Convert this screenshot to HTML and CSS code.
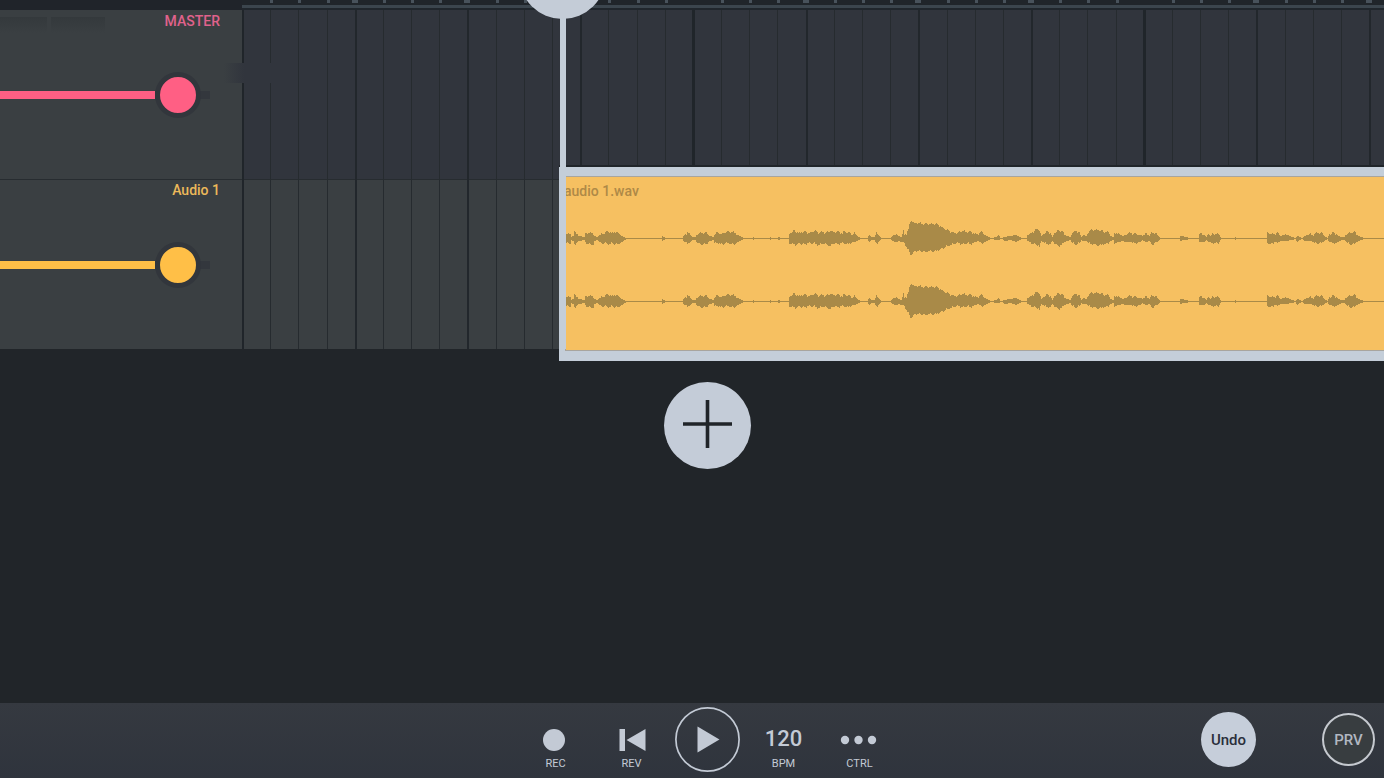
FILE: index.html
```html
<!DOCTYPE html>
<html lang="en">
<head>
<meta charset="utf-8">
<title>Audio Studio</title>
<meta name="viewport" content="width=device-width, initial-scale=1">
<link rel="stylesheet" href="styles.css">
</head>
<body>
<div class="app">
  <main class="workspace">
    <div class="playlist">
      <div class="corner"></div>
      <div class="ruler"><svg class="ruler-ticks" id="ticks" aria-hidden="true"></svg></div>

      <section class="channel channel-master">
        <div class="meter"><span></span><span></span></div>
        <label class="channel-name" for="vol-master">MASTER</label>
        <input class="volume" id="vol-master" type="range" min="0" max="164" value="155">
      </section>
      <div class="lane lane-master"></div>

      <section class="channel channel-audio">
        <label class="channel-name" for="vol-audio">Audio 1</label>
        <input class="volume" id="vol-audio" type="range" min="0" max="164" value="155">
      </section>
      <div class="lane lane-audio"></div>

      <div class="canvas">
        <svg class="gridlines" id="grid" aria-hidden="true"></svg>
        <div class="lane-fade"></div>
        <div class="clip">
          <div class="clip-body">
            <svg class="wave" id="wave" aria-hidden="true"></svg>
            <span class="clip-name">audio 1.wav</span>
          </div>
        </div>
        <div class="playhead"></div>
      </div>
    </div>

    <div class="add-row">
      <button class="add" type="button" aria-label="Add track">
        <svg width="87" height="87" viewBox="0 0 87 87"><path d="M43.500 18V66M19 42H68" stroke="#202429" stroke-width="3.600" fill="none"/></svg>
      </button>
    </div>
  </main>

  <footer class="bar">
    <div class="transport">
      <button class="tool" type="button">
        <svg class="tool-icon" width="32" height="28" viewBox="0 0 32 28"><circle cx="14" cy="14" r="11"/></svg>
        <span>REC</span>
      </button>
      <button class="tool" type="button">
        <svg class="tool-icon" width="32" height="28" viewBox="0 0 32 28"><path d="M3.500 3H9v22H3.500zM29.500 3v22L10.500 14z"/></svg>
        <span>REV</span>
      </button>
      <button class="play" type="button" aria-label="Play">
        <svg width="65" height="65" viewBox="0 0 65 65"><circle cx="32.500" cy="32.500" r="31.600" fill="none" stroke="#c3cad5" stroke-width="1.700"/><path d="M22.500 19.500v26l22-13z" fill="#c3cad5"/></svg>
      </button>
      <button class="tool" type="button">
        <span class="tempo">120</span>
        <span>BPM</span>
      </button>
      <button class="tool" type="button">
        <svg class="tool-icon" width="40" height="28" viewBox="0 0 40 28"><circle cx="5" cy="14" r="4.200"/><circle cx="18.500" cy="14" r="4.200"/><circle cx="32" cy="14" r="4.200"/></svg>
        <span>CTRL</span>
      </button>
    </div>
    <div class="side">
      <button class="round undo" type="button">Undo</button>
      <button class="round preview" type="button">PRV</button>
    </div>
  </footer>
</div>
<script src="app.js"></script>
</body>
</html>
```
FILE: styles.css
```css
* { box-sizing: border-box; }

body {
  margin: 0;
  background: #212529;
  font-family: Roboto, "Liberation Sans", sans-serif;
  font-weight: 500;
}

button {
  margin: 0;
  padding: 0;
  border: 0;
  background: none;
  color: inherit;
  font: inherit;
}

svg { display: block; }

.app {
  display: flex;
  flex-direction: column;
  min-height: 100vh;
  overflow: hidden;
}

.workspace { flex: 1; }

.playlist {
  display: grid;
  grid-template-columns: 242px 1fr;
  grid-template-rows: 10px 170px 169px;
  position: relative;
}

.corner { background: #20242a; }

.ruler {
  overflow: hidden;
  background: linear-gradient(#20252a 0 5px, #3b454d 5px 8px, #20262c 8px);
}

.ruler-ticks {
  width: 100%;
  height: 3px;
  fill: #48525b;
}

.channel {
  display: flex;
  flex-direction: column;
  position: relative;
  background: #3a3f42;
}

.channel-master { --tint: #ff5f84; color: #e0628c; }
.channel-audio { --tint: #ffbf47; color: #ecb95a; }

.channel-master,
.lane-master { border-bottom: 1px solid #272c30; }

.channel-name {
  padding: 2px 22px 0 0;
  font-size: 14px;
  line-height: 18px;
  text-align: right;
}

.channel-audio .channel-name {
  padding-top: 1px;
  padding-bottom: 1px;
}

.meter {
  display: flex;
  gap: 4px;
  position: absolute;
  top: 7px;
  left: 0;
}

.meter span {
  width: 54px;
  height: 16px;
  background: linear-gradient(#34393c, #3a3f42);
}

.meter span:first-child { width: 47px; }

.volume {
  -webkit-appearance: none;
  appearance: none;
  width: 210px;
  height: 46px;
  margin: 42px 0 0;
  background: linear-gradient(var(--tint), var(--tint)) 0 19px / 155px 8px no-repeat,
    linear-gradient(#33373d, #33373d) 0 19px / 210px 8px no-repeat;
}

.volume::-webkit-slider-thumb {
  -webkit-appearance: none;
  width: 46px;
  height: 46px;
  border: 5px solid #32363c;
  border-radius: 50%;
  background: var(--tint);
}

.lane-master { background: #31353d; }
.lane-audio { background: #3a3f42; }

.canvas {
  position: absolute;
  top: 10px;
  bottom: 0;
  left: 242px;
  right: 0;
  pointer-events: none;
}

.gridlines {
  width: 100%;
  height: 100%;
}

.lane-fade {
  position: absolute;
  top: 53px;
  left: -18px;
  width: 60px;
  height: 20px;
  background: linear-gradient(90deg, #3a3f42, #31353d 20px);
}

.clip {
  position: absolute;
  top: 157px;
  left: 317px;
  right: 0;
  padding: 9px 0 10px 6px;
  background: #c4ced9;
  box-shadow: 0 -2px #20252a;
}

.clip-body {
  position: relative;
  height: 175px;
  border: solid #a8a59e;
  border-width: 1px 0 1px 1px;
  background: #f6c061;
}

.clip-name {
  position: absolute;
  top: 5px;
  left: -2px;
  color: #ae8947;
  font-size: 14px;
  line-height: 18px;
}

.wave {
  width: 100%;
  height: 100%;
  fill: #a98a48;
}

.playhead {
  position: absolute;
  top: -10px;
  bottom: 0;
  left: 318px;
  width: 6px;
  background: #c4ced9;
}

.playhead::before {
  content: "";
  position: absolute;
  top: -68px;
  left: -41px;
  width: 87px;
  height: 87px;
  border-radius: 50%;
  background: #c4ccd7;
}

.add-row {
  display: flex;
  justify-content: center;
  padding: 33px 0 32px 31px;
}

.add {
  width: 87px;
  height: 87px;
  border-radius: 50%;
  background: #c4ccd8;
}

.bar {
  display: grid;
  grid-template-columns: 1fr auto 1fr;
  align-items: center;
  height: 75px;
  padding: 0 0 2px 31px;
  background: linear-gradient(#353940, #2f343d);
  color: #c3cad5;
}

.transport {
  display: grid;
  grid-template-columns: repeat(5, 76px);
  grid-column: 2;
  align-items: center;
  justify-items: center;
}

.tool {
  display: flex;
  flex-direction: column;
  align-items: center;
  width: 100%;
  padding: 22px 0 4px;
  font-size: 11px;
  font-weight: 400;
  line-height: 14px;
}

.tool-icon {
  margin-bottom: 3px;
  fill: #c3cad5;
}

.tempo {
  margin-bottom: 3px;
  font-size: 22px;
  font-weight: 500;
  line-height: 26px;
  padding-bottom: 2px;
}

.side {
  display: flex;
  align-items: center;
  justify-content: flex-end;
  gap: 66px;
  padding-right: 9px;
}

.round {
  width: 55px;
  height: 55px;
  border-radius: 50%;
  font-size: 15px;
}

.undo {
  background: #c6ceda;
  color: #2a2f3a;
}

.preview {
  width: 53px;
  height: 53px;
  border: 2px solid #c5c9cf;
  background: #383d40;
  color: #b2b8c2;
}
```
FILE: app.js
```js
const SVG = "http://www.w3.org/2000/svg";

function add(parent, name, attrs) {
  const node = document.createElementNS(SVG, name);
  for (const key in attrs) node.setAttribute(key, attrs[key]);
  parent.appendChild(node);
}

// Sixteen steps to a bar, four to a beat.
const STEP = 28.18;
const grid = document.getElementById("grid");
const ticks = document.getElementById("ticks");
for (let i = 0; i < 140; i++) {
  const x = Math.round(i * STEP);
  const bar = i % 16 === 0;
  const beat = i % 4 === 0;
  const w = bar ? 3 : beat ? 2 : 1;
  add(grid, "rect", { x: x - (bar ? 1 : 0), y: 0, width: w, height: "100%", fill: bar ? "#20252a" : beat ? "#22272c" : "#262b2f" });
  if (!bar) add(ticks, "rect", { x: x - (beat ? 3 : 0), y: 0, width: beat ? 6 : 3, height: 3 });
}

// Runs of sound: [x, height above, height below] along the clip.
const runs = [
  [[0,4,4],[4,4,4],[5,1,1],[7,2,2],[8,6,5],[10,5,4],[12,2,2],[18,1,1],[19,4,3],[21,5,5],[26,5,5],[27,4,6],[28,2,2],[31,1,1],[33,3,3],[37,4,4],[39,6,4],[42,6,5],[47,5,4],[49,6,5],[51,5,5],[54,3,4],[57,1,2],[60,0,0]],
  [[95,0,0],[96,2,2],[99,0,0]],
  [[116,0,0],[118,3,3],[120,4,3],[121,6,5],[123,4,4],[126,1,1],[129,1,1],[131,4,4],[134,5,5],[140,5,5],[143,2,2],[147,1,1],[148,4,4],[152,5,4],[155,4,5],[160,6,4],[167,6,5],[170,4,4],[173,2,2],[178,0,0]],
  [[186,0,0],[187,1,1],[188,0,0]],
  [[203,0,0],[204,1,1],[205,0,0]],
  [[211,0,0],[212,1,1],[214,0,0]],
  [[222,0,0],[223,4,4],[227,7,5],[230,6,6],[233,5,4],[237,6,5],[243,5,4],[248,7,4],[252,5,6],[256,6,4],[259,5,5],[264,7,7],[267,6,4],[273,6,5],[276,4,3],[278,7,4],[281,5,5],[284,5,4],[286,3,3],[288,5,3],[291,2,2],[294,0,0]],
  [[301,0,0],[303,3,3],[305,1,1],[308,1,1],[310,5,4],[312,3,3],[315,0,0]],
  [[324,0,0],[326,2,2],[330,4,3],[332,2,2],[335,1,3],[337,7,3],[338,3,4],[340,4,8],[342,9,11],[344,16,15],[346,17,15],[348,14,12],[352,15,12],[357,14,12],[358,14,13],[362,14,12],[369,14,12],[372,13,11],[375,11,10],[380,8,7],[384,6,6],[388,5,4],[391,5,4],[396,7,5],[401,6,4],[404,6,5],[408,4,3],[412,4,2],[413,5,3],[416,6,4],[418,3,3],[422,1,1],[424,0,0]],
  [[426,0,0],[430,1,1],[432,3,1],[434,0,0]],
  [[436,0,0],[438,1,2],[444,2,1],[450,3,3],[455,0,0]],
  [[460,0,0],[461,3,2],[464,4,3],[468,7,5],[472,9,6],[473,7,8],[475,2,2],[477,4,3],[480,6,5],[484,5,5],[486,1,2],[488,5,4],[492,7,7],[496,7,5],[498,3,3],[504,1,1],[506,5,4],[510,7,5],[513,5,4],[515,1,1],[517,3,2],[520,2,2],[522,6,4],[526,8,5],[532,8,6],[538,6,5],[542,6,4],[544,2,2],[547,1,1],[548,5,4],[553,4,3],[556,2,2],[559,3,3],[563,5,3],[568,4,4],[574,3,3],[576,2,1],[580,4,3],[583,2,2],[585,5,5],[589,5,4],[592,2,2],[594,0,0]],
  [[613,0,0],[614,2,2],[616,2,1],[618,1,1],[624,0,0]],
  [[632,0,0],[633,4,3],[638,3,3],[640,1,1],[642,4,3],[644,2,3],[646,4,4],[652,4,4],[655,0,0]],
  [[668,0,0],[669,1,1],[670,0,0]],
  [[700,0,0],[701,5,4],[705,4,5],[708,4,3],[711,5,4],[714,2,2],[718,3,2],[720,4,2],[725,1,1],[729,0,0],[731,2,3],[733,1,1],[736,0,0],[738,2,2],[744,4,2],[747,2,3],[749,5,4],[755,5,4],[758,2,2],[761,0,0]],
  [[761,0,0],[763,4,3],[768,5,4],[772,2,3],[775,1,1],[778,1,1],[780,4,3],[784,5,5],[788,6,5],[790,3,3],[794,1,1],[799,0,0]]
];

// One column per pixel, with a small ripple on the louder samples.
const RIPPLE = [0, 0, 1, 0, 0, -1, 0, 1, 1, 0, -1];
function columns(run) {
  let d = [];
  for (let k = 0; k + 1 < run.length; k++) {
    const [x0, u0, l0] = run[k];
    const [x1, u1, l1] = run[k + 1];
    for (let x = x0; x < x1; x++) {
      const t = (x - x0) / (x1 - x0);
      let up = Math.round(u0 + (u1 - u0) * t);
      let low = Math.round(l0 + (l1 - l0) * t);
      if (up > 3) up += RIPPLE[x % 11];
      if (low > 3) low += RIPPLE[(x + 4) % 11];
      d.push([x, up, low]);
    }
  }
  return d;
}

const wave = document.getElementById("wave");
for (const middle of [61, 124]) {
  add(wave, "rect", { x: 0, y: middle, width: "100%", height: 1 });
  const d = runs.flatMap(columns).map(([x, up, low]) => `M${x} ${middle - up}h1v${up + low + 1}h-1z`);
  add(wave, "path", { d: d.join("") });
}
```
